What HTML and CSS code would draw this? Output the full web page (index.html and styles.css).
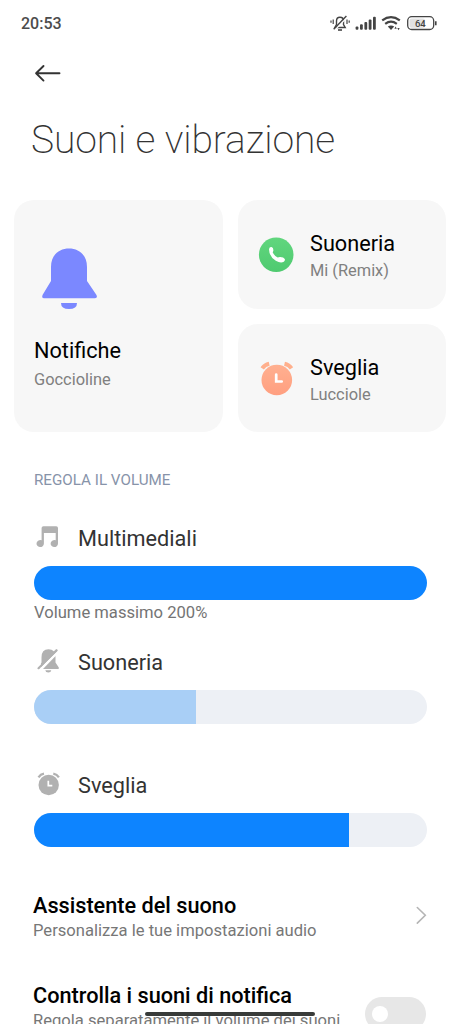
FILE: index.html
```html
<!DOCTYPE html>
<html lang="it">
<head>
<meta charset="utf-8">
<title>Suoni e vibrazione</title>
<link rel="stylesheet" href="styles.css">
</head>
<body>
<div class="screen">
  <header class="status">
    <span class="clock">20:53</span>
    <svg class="status-icons" width="108" height="18" viewBox="330 14 108 18" fill="none" stroke="#444" stroke-width="1.4">
      <path d="M334.800 27.500h10.400l-1.700-2.900v-3.600c0-5-7-5-7 0v3.600z"/>
      <path d="M338 30h4" stroke-width="1.600"/>
      <path d="M334.800 30L347.300 17" stroke="#fff" stroke-width="1.400"/>
      <path d="M333.700 29.200L346.400 16"/>
      <path d="M333.200 19.500v4.500M331 20.500v2.300M347 19.500v4.500M349.200 20.500v2.300" stroke-width="1.200"/>
      <g stroke="none" fill="#444">
        <rect x="355.600" y="26.500" width="2.800" height="3.300" rx="1"/>
        <rect x="360" y="24.200" width="2.800" height="5.600" rx="1"/>
        <rect x="364.400" y="22" width="2.800" height="7.800" rx="1"/>
        <rect x="368.700" y="19.600" width="2.800" height="10.200" rx="1"/>
        <rect x="373" y="16.800" width="2.800" height="13" rx="1"/>
        <path d="M387.800 26.600q3.200-2.300 6.400 0L391 30z"/>
        <path d="M395.600 26.600l1.200 2.200h-2.400zM398.500 30.300l-1.200-2.200h2.400z"/>
      </g>
      <path d="M382.200 20.400q8.800-6.500 17.600 0M385.200 23.800q5.800-4.300 11.600 0" stroke-width="2.200"/>
      <rect x="407.700" y="16.700" width="26" height="12.800" rx="4" stroke-width="1.300"/>
      <rect x="409.500" y="18.500" width="15.500" height="9.200" rx="2" fill="#e2e2e2" stroke="none"/>
      <path d="M435.800 21.200v4" stroke-width="1.600"/>
      <text class="battery" x="420.300" y="26.700" text-anchor="middle">64</text>
    </svg>
  </header>

  <nav class="nav">
    <svg width="28" height="20" viewBox="34 63 28 20" fill="none" stroke="#333" stroke-width="1.900" stroke-linecap="round" stroke-linejoin="round"><path d="M59.500 73.300H36.200M43.500 66l-7.400 7.300 7.400 7.300"/></svg>
  </nav>
  <h1 class="title">Suoni e vibrazione</h1>

  <section class="cards">
    <article class="card card-large">
      <svg width="58" height="64" viewBox="40 247 58 64" fill="#7b88ff">
        <path d="M51 267C51 255 59 248.500 69 248.500S87 255 87 267V281L96.300 294.800Q98 298.200 95 298.200H44.200Q41.200 298.200 42.700 294.800L51 281Z"/>
        <path d="M61 303H77Q77 309 69 309T61 303Z"/>
      </svg>
      <h2 class="card-name">Notifiche</h2>
      <p class="card-value">Goccioline</p>
    </article>
    <article class="card card-small">
      <svg width="36" height="36" viewBox="258 237 36 36">
        <defs><linearGradient id="green" x2="0" y2="1"><stop stop-color="#61d67e"/><stop offset="1" stop-color="#4fca70"/></linearGradient></defs>
        <circle cx="276.200" cy="254.700" r="17.300" fill="url(#green)"/>
        <path d="M269 249.200q.4-2.400 2.500-2.100 2 .6 1.900 3.300l-.7 2.200q1.700 3.300 5 5l2.200-.6q3.700-.1 4.900 2 .5 1.600-1 2.800-3.200 1.800-8-1-6.600-4.100-6.800-11.600z" fill="#fff"/>
      </svg>
      <div><h2 class="card-name">Suoneria</h2><p class="card-value">Mi (Remix)</p></div>
    </article>
    <article class="card card-small">
      <svg width="36" height="36" viewBox="258 360 36 36">
        <defs><linearGradient id="orange" x2="0" y2="1"><stop stop-color="#ffb090"/><stop offset="1" stop-color="#ff9f80"/></linearGradient></defs>
        <circle cx="276.800" cy="379" r="15.300" fill="url(#orange)"/>
        <path d="M262.200 367.400Q264.700 363.800 269.200 362.800M284.500 362.800Q289 363.800 291.500 367.400" fill="none" stroke="#ffb08d" stroke-width="4"/>
        <path d="M276.200 373.500v7h5.500" fill="none" stroke="#fff" stroke-width="2.700" stroke-linecap="round"/>
      </svg>
      <div><h2 class="card-name">Sveglia</h2><p class="card-value">Lucciole</p></div>
    </article>
  </section>

  <h3 class="section-label">REGOLA IL VOLUME</h3>
  <section class="volumes">
    <div class="volume">
      <div class="volume-head">
        <svg width="28" height="28" viewBox="34 524 28 28" fill="#b1b1b1"><path d="M41.600 528q0-1.800 1.800-1.800h12.800q1.800 0 1.800 1.800v15.500a3.700 3.500 0 1 1-2.300-3.200V533H43.900v10.500a3.700 3.500 0 1 1-2.300-3.200z"/></svg>
        <span>Multimediali</span>
      </div>
      <div class="track"><div class="fill" style="width:100%"></div></div>
      <p class="caption">Volume massimo 200%</p>
    </div>
    <div class="volume">
      <div class="volume-head">
        <svg width="28" height="28" viewBox="34 647.500 28 28" fill="#b1b1b1">
          <path d="M41.500 657Q41.500 648.800 48.500 648.800T55.500 657V662L58.800 667Q59.200 668.500 58 668.500H39Q37.700 668.300 38.500 667L41.500 662ZM45.300 669.800H51.300Q51 672 48.300 672T45.300 669.800Z"/>
          <path d="M37.500 672L58.800 650" stroke="#fff" stroke-width="3.200"/>
          <path d="M38.500 667.500L56.500 650" stroke="#b1b1b1" stroke-width="2" stroke-linecap="round"/>
          <path d="M36 668L41 662.500V668Z" fill="#fff"/>
          <path d="M38.500 667.800L56.500 649.800" stroke="#b1b1b1" stroke-width="2" stroke-linecap="round"/>
        </svg>
        <span>Suoneria</span>
      </div>
      <div class="track"><div class="fill fill-muted" style="width:41.300%"></div></div>
    </div>
    <div class="volume">
      <div class="volume-head">
        <svg width="28" height="28" viewBox="34 771 28 28">
          <circle cx="48.700" cy="785" r="10.200" fill="#b1b1b1"/>
          <path d="M38.500 777.300Q40.500 774.300 44 773.700M53.300 773.700Q57 774.400 58.900 777.300" fill="none" stroke="#b1b1b1" stroke-width="2.300"/>
          <path d="M48.300 780.700v4.900h4" fill="none" stroke="#fff" stroke-width="1.700"/>
        </svg>
        <span>Sveglia</span>
      </div>
      <div class="track"><div class="fill" style="width:80.100%"></div></div>
    </div>
  </section>

  <section class="setting">
    <div><h2 class="setting-name">Assistente del suono</h2><p class="setting-text">Personalizza le tue impostazioni audio</p></div>
    <svg class="chevron" width="12" height="20" viewBox="416 905 12 20" fill="none" stroke="#b5b5b5" stroke-width="1.600" stroke-linecap="round"><path d="M418.300 907.500l8 7.800-8 7.800"/></svg>
  </section>
  <section class="setting">
    <div><h2 class="setting-name">Controlla i suoni di notifica</h2><p class="setting-text">Regola separatamente il volume dei suoni</p></div>
    <span class="toggle"><span class="knob"></span></span>
  </section>
  <div class="home-bar"></div>
</div>
</body>
</html>
```
FILE: styles.css
```css
* { box-sizing: border-box; }
body { margin: 0; background: #fff; font-family: Roboto, sans-serif; }
h1, h2, h3, p { margin: 0; font-weight: 400; white-space: nowrap; }
svg { display: block; flex: none; }
.screen { position: relative; width: 461px; height: 1024px; overflow: hidden; background: #fff; }
.status { height: 46px; padding: 14px 23px 0 21px; display: flex; justify-content: space-between; }
.clock { font-size: 16px; font-weight: 500; line-height: 20px; color: #4c4c4c; }
.battery { font: 500 9.5px Roboto, sans-serif; fill: #444; stroke: none; }
.nav { height: 54px; padding: 17px 34px 0; }
.title { height: 100px; padding: 15px 31px 0; font-size: 39px; line-height: 50px; font-weight: 200; letter-spacing: -0.1px; color: #333; }
.cards { display: grid; grid-template-columns: 209px 208px; grid-template-rows: 108.5px 108.5px; gap: 15px; padding-left: 14px; }
.card { background: #f7f7f7; border-radius: 20px; }
.card-large { grid-row: 1 / 3; padding: 47px 20px 0; }
.card-large svg { margin-left: 6px; }
.card-large .card-name { margin-top: 26px; }
.card-small { padding: 30px 0 0 20px; display: flex; gap: 16px; }
.card-small svg { margin-top: 7px; }
.card-name { font-size: 21.7px; line-height: 28px; color: #000; }
.card-value { font-size: 16.4px; line-height: 20px; color: #808080; }
.card-small .card-value { margin-top: 3px; }
.card-large .card-value { margin-top: 5px; }
.section-label { height: 84px; padding: 38px 34px 0; font-size: 15.2px; line-height: 20px; color: #8793a9; }
.volumes { padding: 0 34px; }
.volume { height: 123.5px; }
.volume-head { height: 50px; padding-top: 8px; display: flex; gap: 16px; font-size: 21.7px; line-height: 30px; color: #333; }
.track { height: 34px; border-radius: 17px; background: #edf0f5; overflow: hidden; }
.fill { height: 100%; background: #0d84ff; }
.fill-muted { background: #a9cff6; }
.caption { font-size: 16.6px; line-height: 25px; color: #747474; }
.setting { height: 90px; padding: 4px 34px 0 33px; display: flex; justify-content: space-between; }
.setting-name { font-size: 21.7px; line-height: 29px; font-weight: 500; color: #000; }
.setting-text { font-size: 16.6px; line-height: 22px; color: #777; }
.chevron { margin-top: 14px; }
.toggle { width: 61px; height: 34px; margin-top: 16px; margin-right: 1px; border-radius: 17px; background: #e7e7e7; padding: 9px 7px; flex: none; }
.knob { display: block; width: 16px; height: 16px; border-radius: 50%; background: #fff; }
.home-bar { position: absolute; left: 145px; top: 1012px; width: 170px; height: 4px; border-radius: 2px; background: #383b39; }
```
